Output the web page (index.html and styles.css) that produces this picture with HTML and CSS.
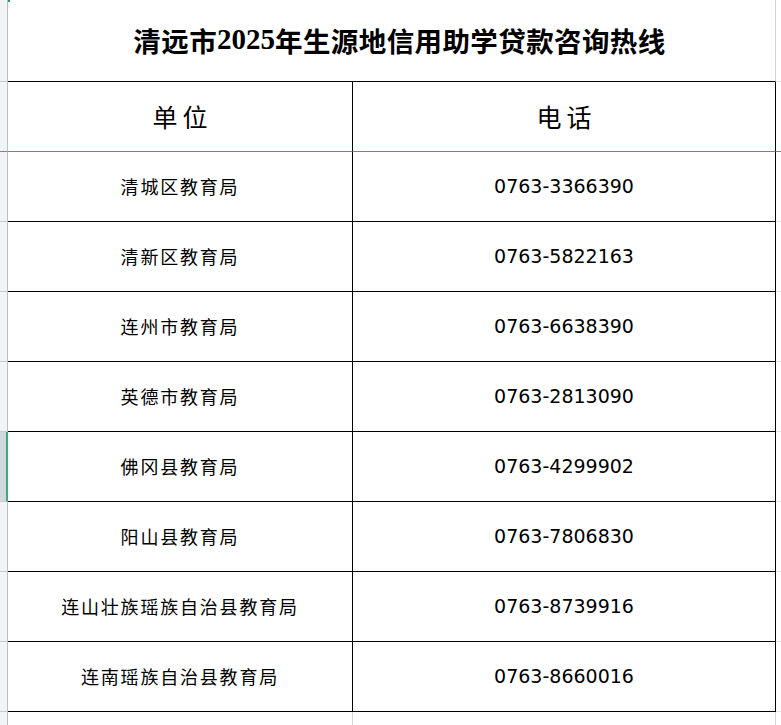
FILE: index.html
```html
<!DOCTYPE html>
<html lang="zh-CN">
<head>
<meta charset="utf-8">
<title>清远市2025年生源地信用助学贷款咨询热线</title>
<link rel="stylesheet" href="styles.css">
</head>
<body>
<div class="sheet">
  <div class="row title-row">
    <div class="rh"></div>
    <div class="title"><span class="corner"></span>清远市<span class="num">2025</span>年生源地信用助学贷款咨询热线</div>
    <div class="rest"></div>
  </div>
  <div class="row head-row">
    <div class="rh"></div>
    <div class="c1 head">单位</div>
    <div class="c2 head">电话</div>
    <div class="rest"></div>
  </div>
  <div class="row data">
    <div class="rh"></div>
    <div class="c1 name">清城区教育局</div>
    <div class="c2 tel">0763-3366390</div>
    <div class="rest"></div>
  </div>
  <div class="row data">
    <div class="rh"></div>
    <div class="c1 name">清新区教育局</div>
    <div class="c2 tel">0763-5822163</div>
    <div class="rest"></div>
  </div>
  <div class="row data">
    <div class="rh"></div>
    <div class="c1 name">连州市教育局</div>
    <div class="c2 tel">0763-6638390</div>
    <div class="rest"></div>
  </div>
  <div class="row data">
    <div class="rh"></div>
    <div class="c1 name">英德市教育局</div>
    <div class="c2 tel">0763-2813090</div>
    <div class="rest"></div>
  </div>
  <div class="row data selected">
    <div class="rh"></div>
    <div class="c1 name">佛冈县教育局</div>
    <div class="c2 tel">0763-4299902</div>
    <div class="rest"></div>
  </div>
  <div class="row data">
    <div class="rh"></div>
    <div class="c1 name">阳山县教育局</div>
    <div class="c2 tel">0763-7806830</div>
    <div class="rest"></div>
  </div>
  <div class="row data">
    <div class="rh"></div>
    <div class="c1 name">连山壮族瑶族自治县教育局</div>
    <div class="c2 tel">0763-8739916</div>
    <div class="rest"></div>
  </div>
  <div class="row data">
    <div class="rh"></div>
    <div class="c1 name">连南瑶族自治县教育局</div>
    <div class="c2 tel">0763-8660016</div>
    <div class="rest"></div>
  </div>
  <div class="row empty">
    <div class="rh"></div>
    <div class="c1 blank"></div>
    <div class="c2 blank"></div>
    <div class="rest"></div>
  </div>
</div>
</body>
</html>
```

FILE: styles.css
```css
* { box-sizing: border-box; }
html, body { margin: 0; padding: 0; background: #fff; }
body {
  width: 781px;
  height: 725px;
  overflow: hidden;
  font-family: "Noto Sans CJK SC", "DejaVu Sans", sans-serif;
  color: #000;
}
.sheet { display: flex; flex-direction: column; }
.row { display: flex; height: 70px; }
.rh {
  width: 8px;
  flex: none;
  background: #f1f3f6;
  border-right: 1px solid #bcc1c9;
  border-bottom: 1px solid #c4c8cf;
}
.rest { flex: 1; border-bottom: 1px solid #e2e4e8; }

.title-row { height: 82px; }
.title {
  position: relative;
  width: 768px;
  flex: none;
  border-bottom: 1px solid #000;
  border-right: 1px solid #cfd3da;
  display: flex;
  align-items: center;
  justify-content: center;
  padding-left: 16px;
  padding-bottom: 2px;
  font-size: 27.5px;
  font-weight: 700;
  letter-spacing: 0.4px;
}
.title .num { font-family: "Liberation Serif", serif; font-size: 29px; letter-spacing: 0; }
.corner {
  position: absolute;
  left: 0;
  top: 0;
  width: 2px;
  height: 2px;
  background: #1f9d55;
}

.c1, .c2 {
  flex: none;
  display: flex;
  align-items: center;
  justify-content: center;
  border-right: 1px solid #000;
  border-bottom: 1px solid #000;
}
.c1 { width: 345px; }
.c2 { width: 423px; }

.head-row .c1, .head-row .c2, .head-row .rh, .head-row .rest {
  border-bottom: 1px solid #3aa874;
}
.head {
  font-size: 25px;
  letter-spacing: 5px;
  padding-left: 5px;
  padding-bottom: 2px;
}

.name {
  font-size: 18px;
  letter-spacing: 1.8px;
  font-weight: 400;
  padding-bottom: 2px;
}
.tel {
  font-family: "DejaVu Sans", sans-serif;
  font-size: 19px;
  padding-bottom: 2px;
  padding-left: 0;
}

.selected .rh {
  background: #d3d7de;
  border-right: 2px solid #2fb27a;
}

.empty { height: 14px; }
.empty .blank { border-right: 1px solid #d4d7dc; border-bottom: none; }
.empty .rh, .empty .rest { border-bottom: none; }
```
